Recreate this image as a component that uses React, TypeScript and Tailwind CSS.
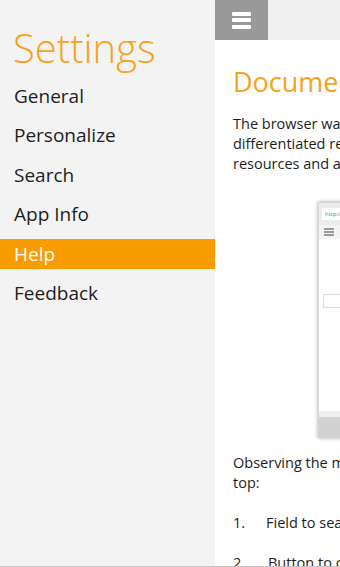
import React from "react";

const menu = ["General", "Personalize", "Search", "App Info", "Help", "Feedback"];

const font = { fontFamily: '"Open Sans", "Noto Sans", sans-serif' };

const Hamburger = ({ small = false }: { small?: boolean }) => (
  <div className={small ? "flex flex-col gap-[1px]" : "flex flex-col gap-[2.5px]"}>
    {[0, 1, 2].map((i) => (
      <div
        key={i}
        className={
          small
            ? "h-[2px] w-[10px] bg-[#9a9a9a]"
            : "h-[4px] w-[19px] rounded-[1px] bg-white"
        }
      />
    ))}
  </div>
);

const Preview = () => (
  <div className="ml-[85px] mt-[28px] h-[236px] w-[200px] border border-[#d6d6d6] bg-white shadow-[0_0_4px_rgba(0,0,0,0.35)]">
    <div className="flex h-[22px] items-center bg-[#ececec] px-[3px]">
      <div className="flex h-[12px] w-full items-center bg-white px-[3px] text-[6px] text-[#777]">
        http://
      </div>
    </div>
    <div className="flex h-[14px] items-center bg-[#f3f3f3] px-[5px]">
      <Hamburger small />
    </div>
    <div className="h-[55px]" />
    <div className="mx-[4px] h-[14px] border border-[#dcdcdc]" />
    <div className="h-[103px]" />
    <div className="h-[6px] bg-[#efefef]" />
    <div className="h-[20px] bg-[#d2d2d2]" />
  </div>
);

export default function App() {
  return (
    <div
      className="flex h-[567px] w-[340px] overflow-hidden border-b border-[#c4c4c4] bg-white"
      style={font}
    >
      <aside className="flex w-[215px] shrink-0 flex-col bg-[#f3f3f3]">
        <h1 className="mt-[24px] pl-[13px] text-[40px] font-light leading-[48px] text-[#f7a21a]">
          Settings
        </h1>
        <ul className="mt-[9px] flex flex-col gap-[9.5px]">
          {menu.map((item) => (
            <li
              key={item}
              className={
                item === "Help"
                  ? "flex h-[30px] items-center bg-[#f79d00] pl-[14px] text-[19px] text-white"
                  : "flex h-[30px] items-center pl-[14px] text-[19px] text-[#1e1e1e]"
              }
            >
              {item}
            </li>
          ))}
        </ul>
      </aside>

      <main className="flex min-w-0 flex-1 flex-col">
        <header className="flex h-10 shrink-0 bg-[#f0f0f0]">
          <button className="flex h-10 w-[53px] items-center justify-center bg-[#999999]">
            <Hamburger />
          </button>
        </header>
        <div className="whitespace-nowrap pl-[18px] text-[14.5px] leading-[20px] text-[#1e1e1e]">
          <h2 className="mt-[25px] text-[27px] leading-[34px] text-[#f7a21a]">
            Documentation
          </h2>
          <div className="mt-[15px]">
            <p>The browser was designed to offer a</p>
            <p>differentiated reading experience with</p>
            <p>resources and a simple interface.</p>
          </div>
          <Preview />
          <div className="mt-[15px]">
            <p>Observing the main screen from the</p>
            <p>top:</p>
          </div>
          <p className="mt-[20px] flex">
            <span className="w-[33px] shrink-0">1.</span>
            <span className="shrink-0">Field to search or type an address</span>
          </p>
          <p className="mt-[20px] flex">
            <span className="w-[35px] shrink-0">2.</span>
            <span className="shrink-0">Button to open the menu</span>
          </p>
        </div>
      </main>
    </div>
  );
}
